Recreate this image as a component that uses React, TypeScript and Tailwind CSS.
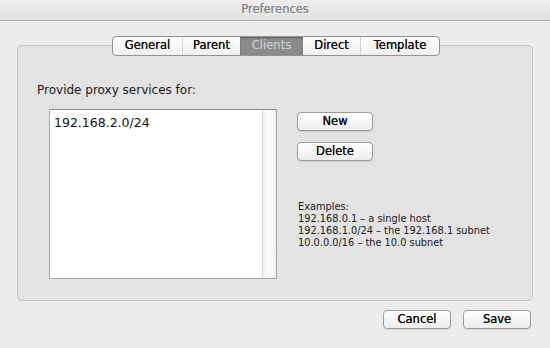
const tabs = [
  { label: 'General', w: 'w-[69px]' },
  { label: 'Parent', w: 'w-[58px]' },
  { label: 'Clients', w: 'w-[63px]', active: true },
  { label: 'Direct', w: 'w-[57px]' },
  { label: 'Template', w: 'w-[79px]' },
];

const examples = [
  '192.168.0.1 – a single host',
  '192.168.1.0/24 – the 192.168.1 subnet',
  '10.0.0.0/16 – the 10.0 subnet',
];

function PushButton({ label, className = '' }: { label: string; className?: string }) {
  return (
    <button
      className={`h-[19px] rounded-[4px] border border-[#9b9b9b] bg-gradient-to-b from-white to-[#ededed] text-[11.5px] leading-none text-[#111] [text-shadow:0_0_0.5px_#000] shadow-[0_1px_0_rgba(0,0,0,0.08)] ${className}`}
    >
      {label}
    </button>
  );
}

export default function App() {
  return (
    <div className="w-[550px] h-[348px] bg-[#ececec] flex flex-col font-['DejaVu_Sans',sans-serif] overflow-hidden">
      <div className="h-[21px] shrink-0 border-b border-[#b1b1b1] bg-gradient-to-b from-[#eeeeee] to-[#e2e2e2] flex items-center justify-center">
        <span className="text-[11.5px] text-[#888] [text-shadow:0_0_0.4px_#999]">Preferences</span>
      </div>

      <div className="relative z-10 mt-[15px] ml-[112px] flex h-[20px] w-fit rounded-[4px] border border-[#929292] bg-gradient-to-b from-white to-[#f0f0f0] overflow-hidden">
        {tabs.map((t, i) => (
          <div
            key={t.label}
            className={`${t.w} flex items-center justify-center text-[11.5px] ${
              t.active
                ? 'bg-[#8b8b8b] text-[#d4d4d4] shadow-[inset_0_1px_2px_rgba(0,0,0,0.35)]'
                : `text-[#141414] [text-shadow:0_0_0.5px_#000] ${i > 0 && !tabs[i - 1].active ? 'border-l border-[#d2d2d2]' : ''}`
            }`}
          >
            {t.label}
          </div>
        ))}
      </div>

      <div className="-mt-[11px] ml-[17px] w-[516px] h-[256px] rounded-[4px] border border-[#c6c6c6] bg-[#e3e3e3] pt-[37px] pl-[19px]">
        <div className="text-[12px] leading-[15px] text-[#1a1a1a]">Provide proxy services for:</div>
        <div className="mt-[11px] ml-[12px] flex gap-[20px]">
          <div className="w-[228px] h-[170px] border border-[#a8a8a8] border-t-[#8f8f8f] bg-white flex">
            <div className="flex-1 pl-[4px] pt-[5px] text-[12.5px] leading-[15px] text-[#111]">192.168.2.0/24</div>
            <div className="w-[14px] border-l border-[#dadada] bg-gradient-to-r from-[#f2f2f2] via-[#fbfbfb] to-[#efefef]" />
          </div>
          <div className="flex flex-col pt-[3px]">
            <PushButton label="New" className="w-[76px]" />
            <PushButton label="Delete" className="w-[76px] mt-[11px]" />
            <div className="mt-[40px] ml-[1px] text-[9.8px] leading-[12px] text-[#1a1a1a]">
              <div>Examples:</div>
              {examples.map((e) => (
                <div key={e}>{e}</div>
              ))}
            </div>
          </div>
        </div>
      </div>

      <div className="mt-[9px] mr-[19px] flex justify-end gap-[12px]">
        <PushButton label="Cancel" className="w-[68px]" />
        <PushButton label="Save" className="w-[68px]" />
      </div>
    </div>
  );
}
